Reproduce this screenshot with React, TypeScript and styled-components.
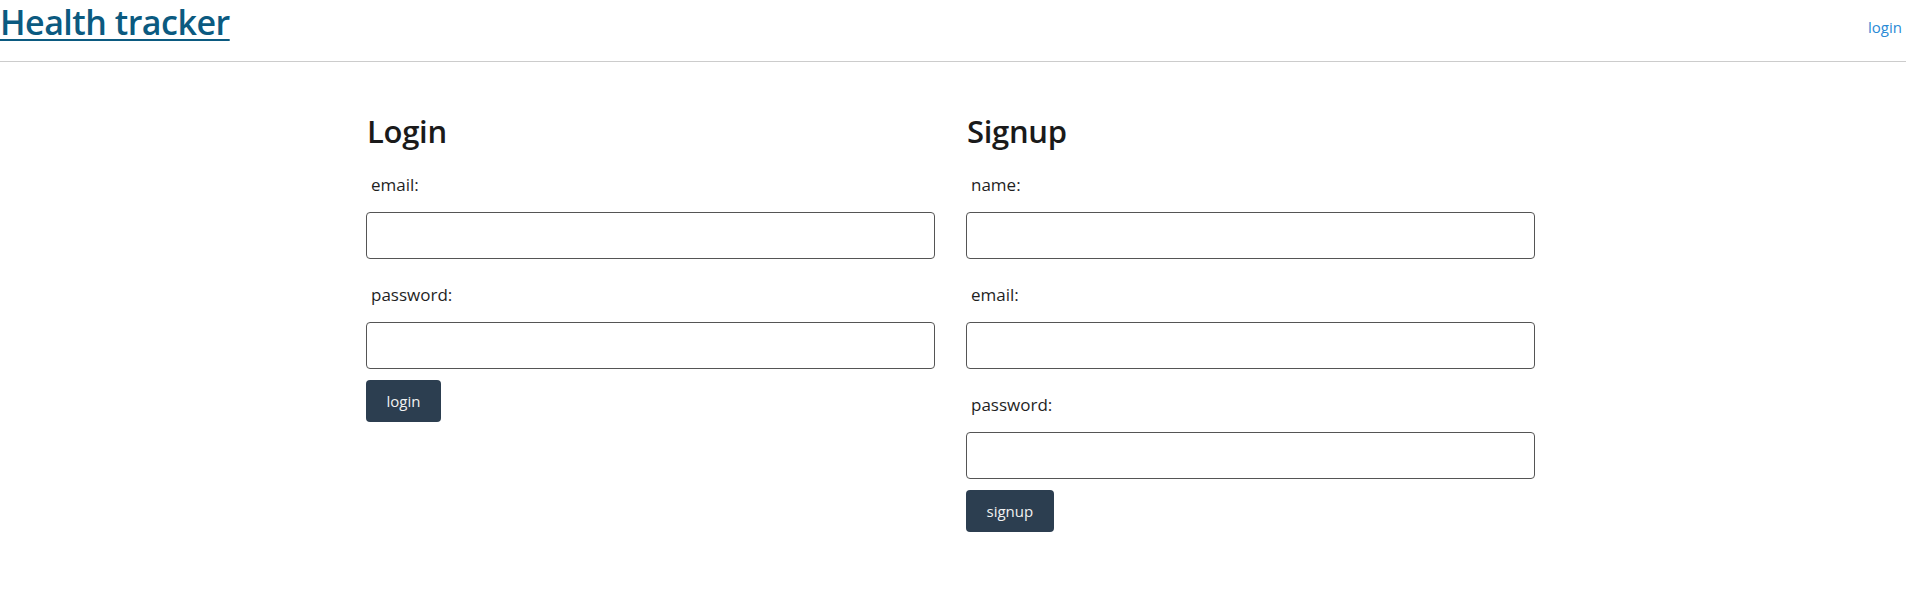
import React from "react";
import styled, { createGlobalStyle } from "styled-components";

const Global = createGlobalStyle`
  html, body { margin: 0; padding: 0; background: #fff; }
  body { font-family: "Open Sans", "Noto Sans", sans-serif; color: #1e1e1e; }
  * { box-sizing: border-box; }
`;

const Header = styled.header`
  display: flex;
  justify-content: space-between;
  align-items: flex-start;
  height: 62px;
  border-bottom: 1px solid #cccccc;
  padding: 0 4px 0 0;
`;

const Title = styled.a`
  margin: 0;
  font-size: 34px;
  line-height: 44px;
  font-weight: 600;
  color: #0b5a80;
  text-decoration: underline;
  text-decoration-thickness: 2px;
  text-underline-offset: 4px;
  letter-spacing: -0.5px;
`;

const NavLink = styled.a`
  font-size: 15px;
  line-height: 22px;
  margin-top: 16px;
  color: #2a8ad6;
  text-decoration: none;
`;

const Main = styled.main`
  display: grid;
  grid-template-columns: 569px 569px;
  column-gap: 31px;
  padding-left: 366px;
  padding-top: 51px;
`;

const Column = styled.section`
  display: flex;
  flex-direction: column;
  align-items: flex-start;
`;

const Heading = styled.h2`
  margin: 0 0 0 1px;
  font-size: 31px;
  line-height: 36px;
  font-weight: 600;
  color: #1a1a1a;
  letter-spacing: -0.3px;
`;

const Label = styled.label`
  display: block;
  margin: 24px 0 15px 5px;
  font-size: 17px;
  line-height: 24px;
  color: #1f1f1f;
`;

const Input = styled.input`
  width: 569px;
  height: 47px;
  border: 1px solid #555;
  border-radius: 4px;
  padding: 0 10px;
  font: inherit;
  background: #fff;
`;

const Button = styled.button`
  margin-top: 11px;
  height: 42px;
  padding: 0 20.5px;
  background: #2c3e50;
  color: #f2f2f2;
  border: none;
  border-radius: 4px;
  font-family: "Open Sans", "Noto Sans", sans-serif;
  font-size: 15px;
  cursor: pointer;
`;

const Field = ({ label, type }: { label: string; type: string }) => (
  <>
    <Label>{label}</Label>
    <Input type={type} />
  </>
);

export default function App() {
  return (
    <>
      <Global />
      <Header>
        <Title href="#">Health tracker</Title>
        <NavLink href="#">login</NavLink>
      </Header>
      <Main>
        <Column>
          <Heading>Login</Heading>
          <Field label="email:" type="email" />
          <Field label="password:" type="password" />
          <Button>login</Button>
        </Column>
        <Column>
          <Heading>Signup</Heading>
          <Field label="name:" type="text" />
          <Field label="email:" type="email" />
          <Field label="password:" type="password" />
          <Button>signup</Button>
        </Column>
      </Main>
    </>
  );
}
